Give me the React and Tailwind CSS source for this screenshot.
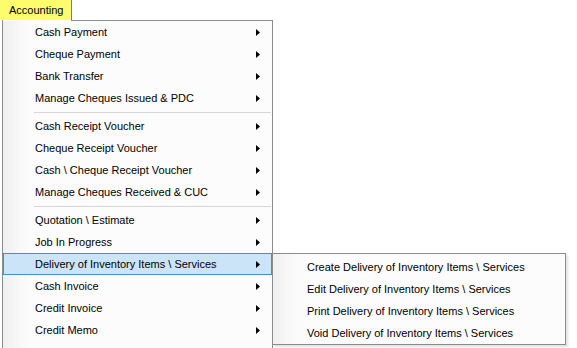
const font = { fontFamily: '"Liberation Sans", Arial, sans-serif' };

const grupos = [
  ['Cash Payment', 'Cheque Payment', 'Bank Transfer', 'Manage Cheques Issued & PDC'],
  ['Cash Receipt Voucher', 'Cheque Receipt Voucher', 'Cash \\ Cheque Receipt Voucher', 'Manage Cheques Received & CUC'],
  ['Quotation \\ Estimate', 'Job In Progress', 'Delivery of Inventory Items \\ Services', 'Cash Invoice', 'Credit Invoice', 'Credit Memo', 'Debit Memo'],
];

const subItens = [
  'Create Delivery of Inventory Items \\ Services',
  'Edit Delivery of Inventory Items \\ Services',
  'Print Delivery of Inventory Items \\ Services',
  'Void Delivery of Inventory Items \\ Services',
];

function Seta() {
  return (
    <svg width="4" height="7" viewBox="0 0 4 7" className="shrink-0">
      <path d="M0 0 L4 3.5 L0 7 Z" fill="#000" />
    </svg>
  );
}

function ItemMenu({ label, ativo }) {
  return (
    <div className={`relative flex h-[22px] items-center pl-[32px] pr-[12px] ${ativo ? 'bg-[#cce4f7] outline outline-1 outline-[#3d8fe0] -outline-offset-1' : ''}`}>
      <span className="flex-1 text-[11px] text-black whitespace-nowrap">{label}</span>
      <Seta />
    </div>
  );
}

export default function App() {
  return (
    <div className="relative h-[348px] w-[577px] overflow-hidden bg-white" style={font}>
      {/* ABA */}
      <div className="flex h-[20px] w-[72px] items-center border-r border-[#7f7f5a] bg-[#fcfc6c] pl-[9px] text-[11px] text-black">
        Accounting
      </div>

      {/* MENU PRINCIPAL */}
      <div className="relative ml-[2px] w-[271px] border-x border-[#8c8c8c] bg-[#fcfcfc]">
        <div className="flex h-px">
          <div className="w-[68px]" />
          <div className="flex-1 bg-[#8c8c8c]" />
        </div>
        <div className="absolute bottom-0 left-0 top-px w-[24px] bg-gradient-to-r from-[#f0f0f0] to-[#fbfbfb]" />
        <div className="relative flex flex-col">
          {grupos.map((grupo, gi) => (
            <div key={gi}>
              {gi > 0 && (
                <div className="flex h-[6px] items-center pl-[31px] pr-[1px]">
                  <div className="h-px w-full bg-[#d7d7d7]" />
                </div>
              )}
              {grupo.map(item => (
                <ItemMenu key={item} label={item} ativo={item.startsWith('Delivery')} />
              ))}
            </div>
          ))}
        </div>
      </div>

      {/* SUBMENU */}
      <div className="absolute left-[272px] top-[253px] w-[294px] border border-[#8c8c8c] bg-[#fcfcfc] pt-[2px] shadow-[2px_2px_2px_rgba(0,0,0,0.12)]">
        <div className="absolute bottom-0 left-0 top-0 w-[24px] bg-gradient-to-r from-[#f0f0f0] to-[#fbfbfb]" />
        <div className="relative flex flex-col">
          {subItens.map(item => (
            <div key={item} className="flex h-[22px] items-center pl-[34px] text-[11px] text-black whitespace-nowrap">
              {item}
            </div>
          ))}
        </div>
      </div>
    </div>
  );
}
